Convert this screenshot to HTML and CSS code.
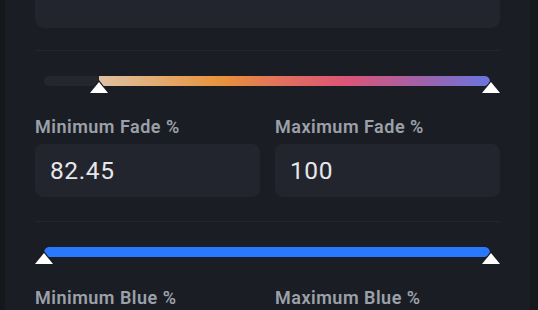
FILE: index.html
```html
<!DOCTYPE html>
<html lang="en">
<head>
    <meta charset="UTF-8">
    <meta name="viewport" content="width=device-width, initial-scale=1.0">
    <title>Filter settings</title>
    <link rel="stylesheet" href="styles.css">
</head>
<body>

<div class="panel">
    <div class="top-box"></div>

    <hr class="divider">

    <!-- Fade -->
    <div class="slider">
        <div class="track">
            <div class="fill fill-fade" style="left: 12.3%; right: 0;"></div>
        </div>
        <span class="thumb" style="left: 12.3%;"></span>
        <span class="thumb thumb-end" style="left: 100%;"></span>
    </div>

    <div class="field-row">
        <div class="field">
            <label for="fade-min">Minimum Fade %</label>
            <input type="text" id="fade-min" value="82.45">
        </div>
        <div class="field">
            <label for="fade-max">Maximum Fade %</label>
            <input type="text" id="fade-max" value="100">
        </div>
    </div>

    <hr class="divider">

    <!-- Blue -->
    <div class="slider">
        <div class="track">
            <div class="fill fill-blue" style="left: 0; right: 0;"></div>
        </div>
        <span class="thumb" style="left: 0%;"></span>
        <span class="thumb thumb-end" style="left: 100%;"></span>
    </div>

    <div class="field-row">
        <div class="field">
            <label for="blue-min">Minimum Blue %</label>
            <input type="text" id="blue-min" value="0">
        </div>
        <div class="field">
            <label for="blue-max">Maximum Blue %</label>
            <input type="text" id="blue-max" value="100">
        </div>
    </div>
</div>

</body>
</html>
```

FILE: styles.css
```css
body {
    font-family: Roboto, "Liberation Sans", sans-serif;
    margin: 0;
    padding: 0 8px 0 5px;
    background-color: #15171b;
    color: #e6e7e9;
    height: 310px;
    overflow: hidden;
}

.panel {
    background-color: #1b1d24;
    padding: 0 30px 40px;
    min-height: 310px;
}

.top-box {
    height: 28px;
    background-color: #22252d;
    border-radius: 0 0 9px 9px;
}

.divider {
    border: none;
    height: 1px;
    background-color: #23262d;
    margin: 22px 0 25px;
}

.slider {
    position: relative;
    margin: 0 10px 31px 9px;
    height: 10px;
}

.track {
    position: relative;
    height: 10px;
    border-radius: 5px;
    background-color: #24272e;
    overflow: hidden;
}

.fill {
    position: absolute;
    top: 0;
    bottom: 0;
}

.fill-fade {
    background: linear-gradient(90deg, #dfc1a3 0%, #e8933b 31%, #e06a63 50%, #dc5577 63%, #a262a8 82%, #6a75de 100%);
    border-radius: 0 5px 5px 0;
}

.fill-blue {
    background-color: #2979ff;
    border-radius: 5px;
}

/* triangle handle */
.thumb {
    position: absolute;
    top: 4px;
    width: 0;
    height: 0;
    margin-left: -11px;
    border-left: 11px solid transparent;
    border-right: 11px solid transparent;
    border-bottom: 14px solid #1b1d24;
}

.thumb-end {
    margin-left: -10px;
}

.thumb::after {
    content: '';
    position: absolute;
    top: 2px;
    left: -9px;
    border-left: 9px solid transparent;
    border-right: 9px solid transparent;
    border-bottom: 11px solid #ffffff;
}

.field-row {
    display: grid;
    grid-template-columns: 1fr 1fr;
    gap: 15px;
}

.field label {
    display: block;
    font-size: 18px;
    line-height: 20px;
    font-weight: 600;
    letter-spacing: 0.5px;
    color: #9ba1a9;
    margin-bottom: 7px;
}

.field input {
    display: block;
    width: 100%;
    box-sizing: border-box;
    height: 53px;
    padding: 0 15px;
    border: none;
    border-radius: 8px;
    background-color: #22252d;
    color: #e6e7e9;
    font-family: Roboto, "Liberation Sans", sans-serif;
    font-size: 24.5px;
    letter-spacing: 0.6px;
    line-height: 53px;
    outline: none;
}

.field-row + .divider {
    margin-top: 24px;
}
```
